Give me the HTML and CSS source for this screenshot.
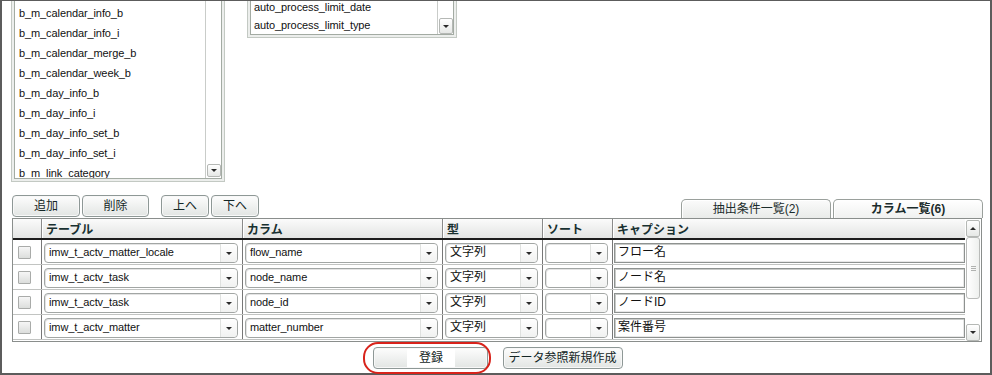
FILE: index.html
```html
<!DOCTYPE html>
<html lang="ja">
<head>
<meta charset="utf-8">
<title>カラム一覧</title>
<link rel="stylesheet" href="styles.css">
</head>
<body>
<div class="frame">
  <div class="top">
    <div class="listbox lb-tables">
      <div class="lb-inner">
        <ul class="lb-items">
          <li>b_m_calendar_info_b</li>
          <li>b_m_calendar_info_i</li>
          <li>b_m_calendar_merge_b</li>
          <li>b_m_calendar_week_b</li>
          <li>b_m_day_info_b</li>
          <li>b_m_day_info_i</li>
          <li>b_m_day_info_set_b</li>
          <li>b_m_day_info_set_i</li>
          <li>b_m_link_category</li>
        </ul>
        <div class="lb-scroll"><span class="sb-btn"><i class="arr-down"></i></span></div>
      </div>
    </div>
    <div class="listbox lb-cols">
      <div class="lb-inner">
        <ul class="lb-items">
          <li>auto_process_limit_date</li>
          <li>auto_process_limit_type</li>
        </ul>
        <div class="lb-scroll"><span class="sb-btn"><i class="arr-down"></i></span></div>
      </div>
    </div>
  </div>

  <div class="toolbar">
    <div class="btn-groups">
      <div class="btn-group">
        <button class="btn w-add">追加</button>
        <button class="btn w-del">削除</button>
      </div>
      <div class="btn-group">
        <button class="btn w-move">上へ</button>
        <button class="btn w-move">下へ</button>
      </div>
    </div>
    <div class="tabs">
      <div class="tab">抽出条件一覧(2)</div>
      <div class="tab active">カラム一覧(6)</div>
    </div>
  </div>

  <div class="table-wrap">
    <div class="grid">
      <div class="row head">
        <div class="cell c-chk"></div>
        <div class="cell c-tbl">テーブル</div>
        <div class="cell c-col">カラム</div>
        <div class="cell c-type">型</div>
        <div class="cell c-sort">ソート</div>
        <div class="cell c-cap">キャプション</div>
      </div>

      <div class="row">
        <div class="cell c-chk"><span class="chk"></span></div>
        <div class="cell c-tbl"><div class="sel"><span class="val lt">imw_t_actv_matter_locale</span><span class="dd"><i class="arr-down"></i></span></div></div>
        <div class="cell c-col"><div class="sel"><span class="val lt">flow_name</span><span class="dd"><i class="arr-down"></i></span></div></div>
        <div class="cell c-type"><div class="sel"><span class="val">文字列</span><span class="dd"><i class="arr-down"></i></span></div></div>
        <div class="cell c-sort"><div class="sel"><span class="val"></span><span class="dd"><i class="arr-down"></i></span></div></div>
        <div class="cell c-cap"><div class="inp">フロー名</div></div>
      </div>

      <div class="row">
        <div class="cell c-chk"><span class="chk"></span></div>
        <div class="cell c-tbl"><div class="sel"><span class="val lt">imw_t_actv_task</span><span class="dd"><i class="arr-down"></i></span></div></div>
        <div class="cell c-col"><div class="sel"><span class="val lt">node_name</span><span class="dd"><i class="arr-down"></i></span></div></div>
        <div class="cell c-type"><div class="sel"><span class="val">文字列</span><span class="dd"><i class="arr-down"></i></span></div></div>
        <div class="cell c-sort"><div class="sel"><span class="val"></span><span class="dd"><i class="arr-down"></i></span></div></div>
        <div class="cell c-cap"><div class="inp">ノード名</div></div>
      </div>

      <div class="row">
        <div class="cell c-chk"><span class="chk"></span></div>
        <div class="cell c-tbl"><div class="sel"><span class="val lt">imw_t_actv_task</span><span class="dd"><i class="arr-down"></i></span></div></div>
        <div class="cell c-col"><div class="sel"><span class="val lt">node_id</span><span class="dd"><i class="arr-down"></i></span></div></div>
        <div class="cell c-type"><div class="sel"><span class="val">文字列</span><span class="dd"><i class="arr-down"></i></span></div></div>
        <div class="cell c-sort"><div class="sel"><span class="val"></span><span class="dd"><i class="arr-down"></i></span></div></div>
        <div class="cell c-cap"><div class="inp">ノードID</div></div>
      </div>

      <div class="row">
        <div class="cell c-chk"><span class="chk"></span></div>
        <div class="cell c-tbl"><div class="sel"><span class="val lt">imw_t_actv_matter</span><span class="dd"><i class="arr-down"></i></span></div></div>
        <div class="cell c-col"><div class="sel"><span class="val lt">matter_number</span><span class="dd"><i class="arr-down"></i></span></div></div>
        <div class="cell c-type"><div class="sel"><span class="val">文字列</span><span class="dd"><i class="arr-down"></i></span></div></div>
        <div class="cell c-sort"><div class="sel"><span class="val"></span><span class="dd"><i class="arr-down"></i></span></div></div>
        <div class="cell c-cap"><div class="inp">案件番号</div></div>
      </div>
    </div>
    <div class="vscroll">
      <span class="sb-btn up"><i class="arr-up"></i></span>
      <span class="thumb"><i class="grip"></i></span>
      <span class="track"></span>
      <span class="sb-btn down"><i class="arr-down"></i></span>
    </div>
  </div>

  <div class="actions">
    <div class="ring"><button class="btn w-save"><span class="hl">登録</span></button></div>
    <button class="btn w-new">データ参照新規作成</button>
  </div>
</div>
</body>
</html>
```

FILE: styles.css
```css
* { box-sizing: border-box; margin: 0; padding: 0; }
body {
  margin: 0;
  background: #fff;
  font-family: "Liberation Sans", "Noto Sans CJK JP", sans-serif;
  font-size: 12px;
  color: #111;
}
.frame {
  width: 992px;
  height: 375px;
  border: 2px solid #5c5c5c;
  border-top-width: 1px;
  display: flex;
  flex-direction: column;
}

/* ---------- list boxes ---------- */
.top {
  display: flex;
  align-items: flex-start;
  gap: 22px;
  padding-left: 9px;
  flex-shrink: 0;
}
.listbox {
  border: 1px solid #c3c9c3;
  border-top: none;
  background: #eceeec;
  padding: 0 2px 2px 2px;
}
.lb-inner {
  height: 100%;
  background: #fff;
  border: 1px solid #a3aba3;
  border-top: none;
  display: flex;
  overflow: hidden;
}
.lb-items {
  flex: 1;
  list-style: none;
  padding-left: 4px;
}
.lb-items li {
  font-size: 11px;
  letter-spacing: -0.1px;
  white-space: nowrap;
  color: #111;
}
.lb-tables { width: 214px; height: 181px; }
.lb-tables .lb-items { padding-top: 2px; }
.lb-tables .lb-items li { height: 20px; line-height: 20px; }
.lb-cols { width: 210px; height: 37px; }
.lb-cols .lb-items { margin-top: -3px; padding-left: 3px; }
.lb-cols .lb-items li { height: 18px; line-height: 18px; }

.lb-scroll {
  width: 16px;
  border-left: 1px solid #c9ccc9;
  display: flex;
  flex-direction: column;
  justify-content: flex-end;
  padding: 0 1px 0 1px;
}
.lb-tables .lb-scroll { padding-bottom: 1px; }
.lb-tables .lb-scroll .sb-btn { height: 13px; }
.lb-cols .lb-scroll .sb-btn { height: 16px; }

.sb-btn {
  display: flex;
  align-items: center;
  justify-content: center;
  width: 14px;
  border: 1px solid #b5b8b5;
  border-radius: 2px;
  background: linear-gradient(#ffffff, #e6e8e6);
}
.arr-down, .arr-up {
  display: block;
  width: 0;
  height: 0;
  border-left: 3px solid transparent;
  border-right: 3px solid transparent;
}
.arr-down { border-top: 3px solid #2a2a2a; }
.arr-up { border-bottom: 3px solid #2a2a2a; }

/* ---------- toolbar ---------- */
.toolbar {
  height: 36px;
  flex-shrink: 0;
  display: flex;
  justify-content: space-between;
  align-items: flex-end;
  padding: 0 7px 0 10px;
}
.btn-groups { display: flex; gap: 12px; margin-bottom: 1px; }
.btn-group { display: flex; gap: 2px; }
.btn {
  height: 22px;
  border: 1px solid #8e9896;
  border-radius: 4px;
  background: linear-gradient(#fdfdfd, #e2e5e3);
  box-shadow: inset 0 0 0 1px #f8f8f8;
  font-family: "Liberation Sans", "Noto Sans CJK JP", sans-serif;
  font-size: 12px;
  color: #142626;
  display: flex;
  align-items: center;
  justify-content: center;
  line-height: 1;
}
.w-add { width: 68px; }
.w-del { width: 67px; }
.w-move { width: 48px; }

.tabs { display: flex; gap: 2px; }
.tab {
  width: 150px;
  height: 19px;
  border: 1px solid #9aa09c;
  border-bottom: none;
  border-radius: 5px 5px 0 0;
  background: linear-gradient(#fbfbfb, #e9ebe9);
  box-shadow: inset 1px 1px 0 #fff;
  text-align: center;
  line-height: 18px;
  color: #1b2c2c;
}
.tab.active { font-weight: bold; background: linear-gradient(#ffffff, #f0f1f0); }

/* ---------- table ---------- */
.table-wrap {
  margin: 0 8px 0 10px;
  height: 124px;
  flex-shrink: 0;
  border: 1px solid #8a8e8c;
  display: flex;
}
.grid { width: 952px; display: flex; flex-direction: column; }
.row {
  display: flex;
  height: 25px;
  flex-shrink: 0;
  border-bottom: 1px solid #c2c4c2;
}
.row.head {
  height: 21px;
  border-bottom: 2px solid #1c1c1c;
  background: linear-gradient(#fbfbfb, #e3e4e3);
}
.cell {
  border-left: 1px solid #777;
  display: flex;
  align-items: stretch;
  padding: 3px 4px 1px 2px;
}
.head .cell {
  border-left: 1px solid #8a8a8a;
  box-shadow: inset 1px 0 0 #fff;
  padding: 0 0 0 4px;
  align-items: center;
  font-weight: bold;
  color: #183030;
}
.c-chk { width: 28px; border-left: none !important; box-shadow: none !important; padding: 0 0 0 5px; align-items: center; }
.c-tbl { width: 201px; }
.c-col { width: 200px; }
.c-type { width: 100px; }
.c-sort { width: 70px; }
.c-cap { width: 353px; padding: 3px 0 1px 1px; }

.chk {
  width: 13px;
  height: 13px;
  border: 1px solid #a9aba9;
  border-radius: 1px;
  background: linear-gradient(#f6f6f6, #dcdedc);
}
.sel {
  flex: 1;
  display: flex;
  border: 1px solid #a2a6a4;
  border-radius: 4px;
  background: #fff;
  box-shadow: inset 1px 1px 0 #e4e4e4;
}
.val {
  flex: 1;
  padding-left: 4px;
  line-height: 17px;
  white-space: nowrap;
  overflow: hidden;
  color: #111;
}
.val.lt { font-size: 11px; letter-spacing: -0.1px; }
.dd {
  width: 17px;
  border-left: 1px solid #dfe1df;
  display: flex;
  align-items: center;
  justify-content: center;
  background: linear-gradient(#fff, #f1f2f1);
  border-radius: 0 4px 4px 0;
}
.inp {
  flex: 1;
  border: 1px solid #8e9290;
  box-shadow: inset 1px 1px 0 #c8cac8, inset -1px -1px 0 #e8e8e8;
  background: #fff;
  padding-left: 3px;
  line-height: 17px;
  color: #111;
}

.vscroll {
  width: 16px;
  display: flex;
  flex-direction: column;
  padding: 1px 1px 0 1px;
  background: #fff;
}
.vscroll .sb-btn { height: 17px; flex-shrink: 0; }
.vscroll .thumb {
  height: 62px;
  width: 14px;
  flex-shrink: 0;
  border: 1px solid #b9bbb9;
  border-radius: 3px;
  background: linear-gradient(to right, #ffffff, #eef0ee);
  display: flex;
  align-items: center;
  justify-content: center;
}
.grip {
  display: block;
  width: 5px;
  height: 5px;
  border-top: 1px solid #b0b2b0;
  border-bottom: 1px solid #b0b2b0;
  background: linear-gradient(#b0b2b0, #b0b2b0) center / 100% 1px no-repeat;
}
.vscroll .track { flex: 1; }

/* ---------- actions ---------- */
.actions {
  margin-top: 5px;
  display: flex;
  justify-content: center;
  gap: 15px;
  padding-left: 3px;
}
.ring { position: relative; }
.ring::after {
  content: "";
  position: absolute;
  left: -10px;
  right: -3px;
  top: -5px;
  bottom: -5px;
  border: 2px solid #d8231b;
  border-radius: 15px;
  pointer-events: none;
}
.w-save { width: 115px; }
.w-save .hl {
  display: flex;
  align-items: center;
  justify-content: center;
  width: 48px;
  height: 18px;
  background: #fff;
  margin-left: 2px;
}
.w-new { width: 120px; }
```
